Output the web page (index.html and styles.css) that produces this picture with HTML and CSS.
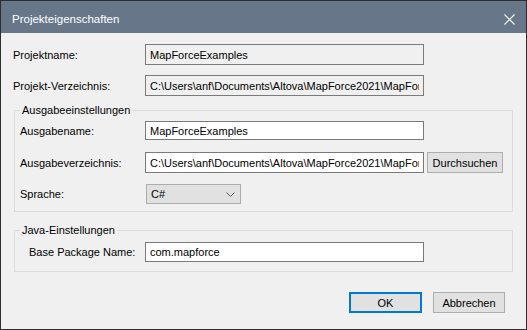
FILE: index.html
```html
<!DOCTYPE html>
<html lang="de">
<head>
  <meta charset="UTF-8" />
  <title>Projekteigenschaften</title>
  <link rel="stylesheet" href="styles.css">
</head>
<body>
  <div class="dialog">
    <div class="titlebar">
      <span class="title">Projekteigenschaften</span>
      <svg class="close-icon" width="11" height="11" viewBox="0 0 11 11">
        <path d="M0.5 0.5 L10.5 10.5 M10.5 0.5 L0.5 10.5" stroke="#fff" stroke-width="1.1" fill="none" />
      </svg>
    </div>

    <div class="content">
      <div class="row">
        <label class="lbl lbl-main">Projektname:</label>
        <input class="field field-ro" type="text" readonly value="MapForceExamples" />
      </div>
      <div class="row">
        <label class="lbl lbl-main">Projekt-Verzeichnis:</label>
        <input class="field field-ro" type="text" readonly value="C:\Users\anf\Documents\Altova\MapForce2021\MapForceExamples" />
      </div>

      <fieldset class="group group-output">
        <legend>Ausgabeeinstellungen</legend>
        <div class="group-body">
          <div class="row">
            <label class="lbl lbl-output">Ausgabename:</label>
            <input class="field field-short" type="text" value="MapForceExamples" />
          </div>
          <div class="row row-dir">
            <label class="lbl lbl-output">Ausgabeverzeichnis:</label>
            <input class="field" type="text" value="C:\Users\anf\Documents\Altova\MapForce2021\MapForceExamples" />
            <button class="btn btn-browse">Durchsuchen</button>
          </div>
          <div class="row row-lang">
            <label class="lbl lbl-output">Sprache:</label>
            <div class="select">
              <span>C#</span>
              <svg width="9" height="5" viewBox="0 0 9 5">
                <path d="M0.5 0.5 L4.5 4.5 L8.5 0.5" stroke="#5a5a5a" stroke-width="1" fill="none" />
              </svg>
            </div>
          </div>
        </div>
      </fieldset>

      <fieldset class="group group-java">
        <legend>Java-Einstellungen</legend>
        <div class="group-body">
          <div class="row">
            <label class="lbl lbl-java">Base Package Name:</label>
            <input class="field" type="text" value="com.mapforce" />
          </div>
        </div>
      </fieldset>

      <div class="actions">
        <button class="btn btn-default">OK</button>
        <button class="btn btn-cancel">Abbrechen</button>
      </div>
    </div>
  </div>
</body>
</html>
```

FILE: styles.css
```css
html, body {
  margin: 0;
  padding: 0;
}
body {
  font-family: "Liberation Sans", Arial, sans-serif;
  font-size: 11px;
  color: #000;
  background: #f0f0f0;
}

.dialog {
  width: 527px;
  height: 330px;
  box-sizing: border-box;
  border: 1px solid #2d2d2d;
  background: #f0f0f0;
}

.titlebar {
  height: 32px;
  box-sizing: border-box;
  padding: 4px 11px 0 11px;
  background: #677789;
  color: #fff;
  display: flex;
  align-items: center;
  justify-content: space-between;
}
.title { font-size: 11.5px; }

.content { padding: 11px 13px 0 12px; }

.row {
  display: flex;
  align-items: center;
}
.row + .row { margin-top: 10px; }

.lbl { flex: none; }
.lbl-main { width: 132px; }
.lbl-output { width: 125px; }
.lbl-java { width: 116px; }

.field {
  width: 279px;
  height: 21px;
  box-sizing: border-box;
  margin: 0;
  padding: 0 4px;
  border: 1px solid #7a7a7a;
  background: #fff;
  font-family: "Liberation Sans", Arial, sans-serif;
  font-size: 11px;
  color: #000;
  outline: none;
}
.field-ro { background: #f0f0f0; }
.field-short { height: 19px; }

.group {
  width: 499px;
  box-sizing: border-box;
  min-width: 0;
  margin: 8px 0 0 1px;
  padding: 0;
  border: 1px solid #dcdcdc;
}
.group legend {
  padding: 0 2px;
  margin-left: 5px;
  line-height: 13px;
}
.group-output .group-body { padding: 4px 0 7px 5px; }
.group-output .row-dir { margin-top: 12px; }
.group-output .row-lang { margin-top: 11px; }
.group-java { margin-top: 12px; }
.group-java .group-body { padding: 5px 0 9px 14px; }
.group-java .field { height: 20px; }

.select {
  width: 95px;
  height: 20px;
  box-sizing: border-box;
  margin-left: 1px;
  padding: 0 5px 0 4px;
  border: 1px solid #adadad;
  background: #e1e1e1;
  display: flex;
  align-items: center;
  justify-content: space-between;
}

.btn {
  height: 21px;
  box-sizing: border-box;
  margin: 0;
  padding: 0;
  border: 1px solid #adadad;
  background: #e1e1e1;
  font-family: "Liberation Sans", Arial, sans-serif;
  font-size: 11px;
  color: #000;
}
.btn-browse {
  width: 76px;
  margin-left: 3px;
}

.actions {
  display: flex;
  justify-content: flex-end;
  gap: 11px;
  margin-top: 20px;
  padding-right: 8px;
}
.btn-default {
  width: 73px;
  border: 2px solid #0078d7;
}
.btn-cancel { width: 72px; }
```
